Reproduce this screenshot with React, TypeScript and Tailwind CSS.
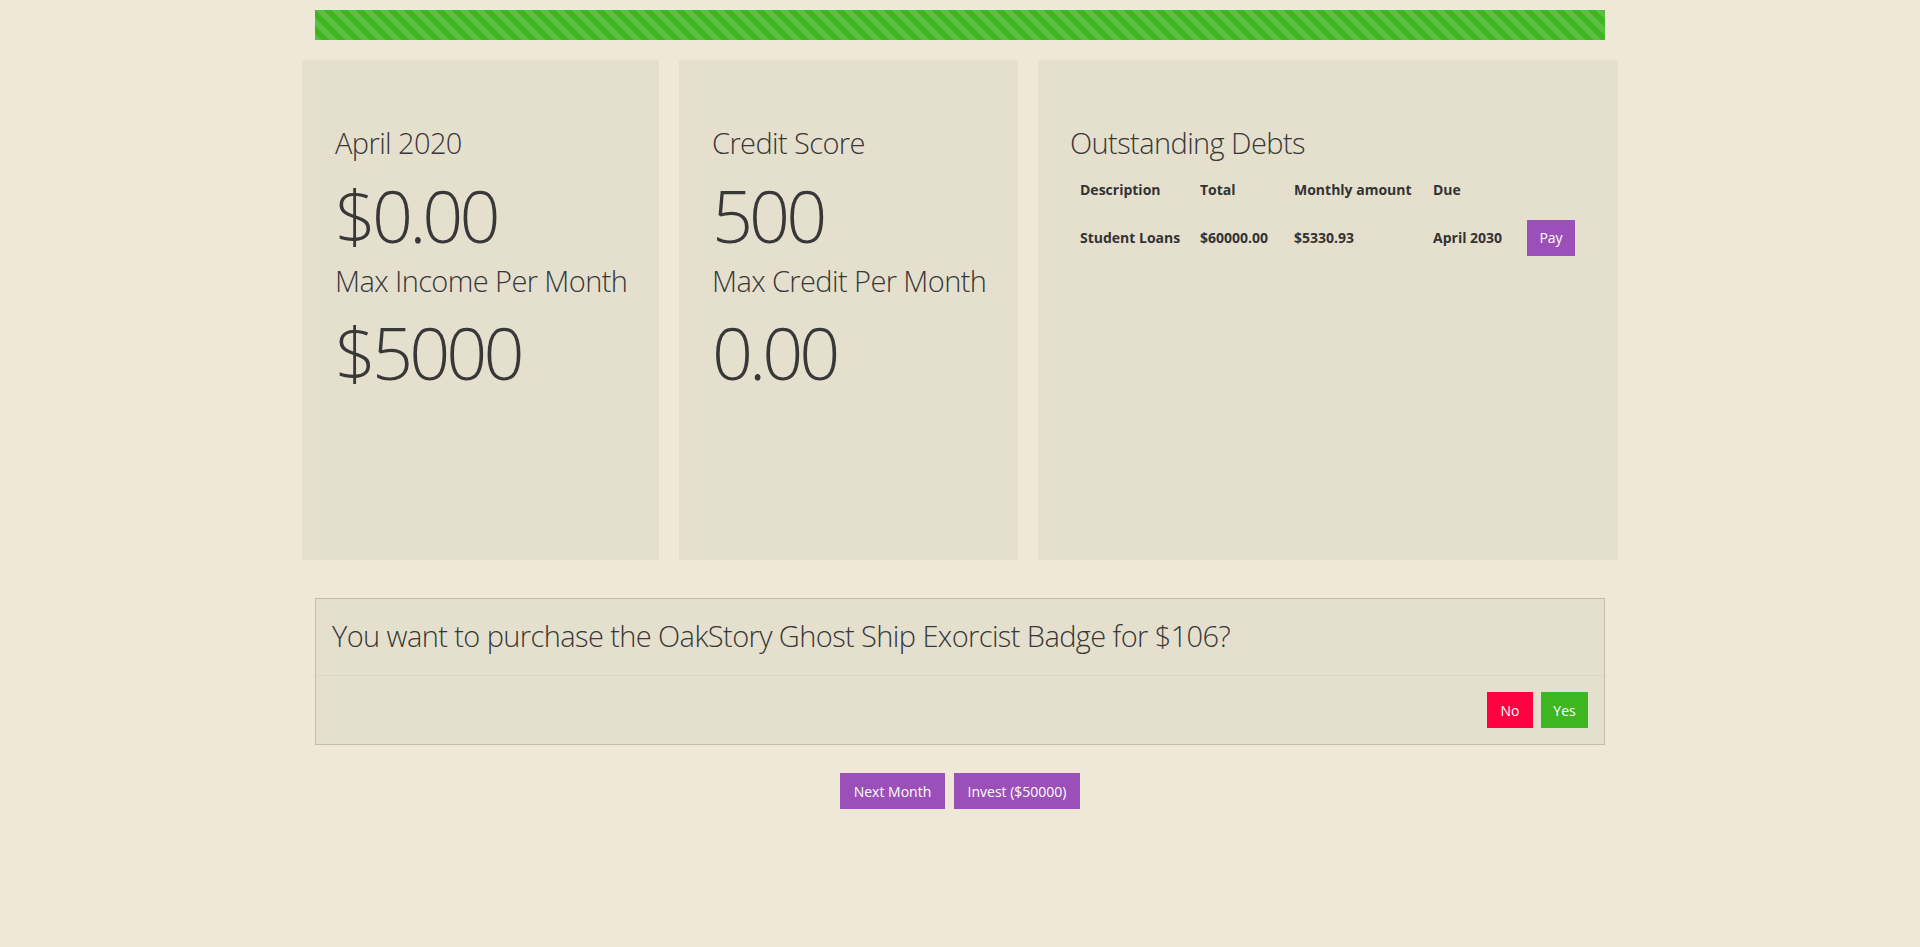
import React from 'react'

const StatCard = ({ width, title, value, subtitle, subvalue }: { width: string; title: string; value: string; subtitle: string; subvalue: string }) => (
  <div className={`${width} h-full bg-[#e5e0ce] pl-[33px] pt-[65px]`}>
    <h3 className="text-[29px] leading-[36px] font-light tracking-[-0.6px]">{title}</h3>
    <div className="mt-[11px] text-[72px] leading-[86px] font-light tracking-[-4px]">{value}</div>
    <h3 className="mt-[5px] text-[29px] leading-[36px] font-light tracking-[-0.6px]">{subtitle}</h3>
    <div className="mt-[10px] text-[72px] leading-[86px] font-light tracking-[-4px]">{subvalue}</div>
  </div>
)

const App: React.FC = () => {
  const debts = [{ desc: 'Student Loans', total: '$60000.00', monthly: '$5330.93', due: 'April 2030' }]
  return (
    <main className="min-h-[947px] bg-[#efe8d7] font-['Open_Sans',sans-serif] text-[#383838]">
      <div className="mx-auto w-[1316px] pt-[10px]">
        <div className="mx-auto h-[30px] w-[1290px] bg-[#3db61f] bg-[linear-gradient(45deg,rgba(255,255,255,.15)_25%,transparent_25%,transparent_50%,rgba(255,255,255,.15)_50%,rgba(255,255,255,.15)_75%,transparent_75%,transparent)] bg-[length:16px_16px]" />

        <div className="mt-[20px] flex h-[500px] gap-5">
          <StatCard width="w-[357px]" title="April 2020" value="$0.00" subtitle="Max Income Per Month" subvalue="$5000" />
          <StatCard width="w-[339px]" title="Credit Score" value="500" subtitle="Max Credit Per Month" subvalue="0.00" />
          <div className="h-full flex-1 bg-[#e5e0ce] pl-[32px] pt-[65px]">
            <h3 className="text-[29px] leading-[36px] font-light tracking-[-0.6px]">Outstanding Debts</h3>
            <table className="mt-[11px] text-[14px] font-bold text-[#333]">
              <thead>
                <tr className="h-[34px]">
                  <th className="w-[120px] pl-[10px] text-left">Description</th>
                  <th className="w-[94px] pl-[10px] text-left">Total</th>
                  <th className="w-[139px] pl-[10px] text-left">Monthly amount</th>
                  <th className="w-[94px] pl-[10px] text-left">Due</th>
                  <th className="pl-[10px]"></th>
                </tr>
              </thead>
              <tbody>
                {debts.map((d, i) => (
                  <tr key={i} className="h-[63px]">
                    <td className="pl-[10px]">{d.desc}</td>
                    <td className="pl-[10px]">{d.total}</td>
                    <td className="pl-[10px]">{d.monthly}</td>
                    <td className="pl-[10px]">{d.due}</td>
                    <td className="pl-[10px]">
                      <button className="h-[36px] w-[48px] bg-[#9a50b8] text-[14px] font-normal text-white">Pay</button>
                    </td>
                  </tr>
                ))}
              </tbody>
            </table>
          </div>
        </div>

        <div className="mx-auto mt-[38px] w-[1290px] border border-[#c2bcaa] bg-[#e5e0ce]">
          <div className="border-b border-[#dad7cc] px-4 pt-[14px] pb-[16px]">
            <p className="text-[29px] leading-[46px] font-light tracking-[-0.6px]">You want to purchase the OakStory Ghost Ship Exorcist Badge for $106?</p>
          </div>
          <div className="flex justify-end gap-2 p-4">
            <button className="h-[36px] w-[46px] bg-[#ff0040] text-[14px] text-white">No</button>
            <button className="h-[36px] w-[47px] bg-[#3db61f] text-[14px] text-white">Yes</button>
          </div>
        </div>

        <div className="mt-[28px] flex justify-center gap-[9px]">
          <button className="h-[36px] w-[105px] bg-[#9a50b8] text-[14px] text-white">Next Month</button>
          <button className="h-[36px] w-[126px] bg-[#9a50b8] text-[14px] text-white">Invest ($50000)</button>
        </div>
      </div>
    </main>
  )
}

export default App
